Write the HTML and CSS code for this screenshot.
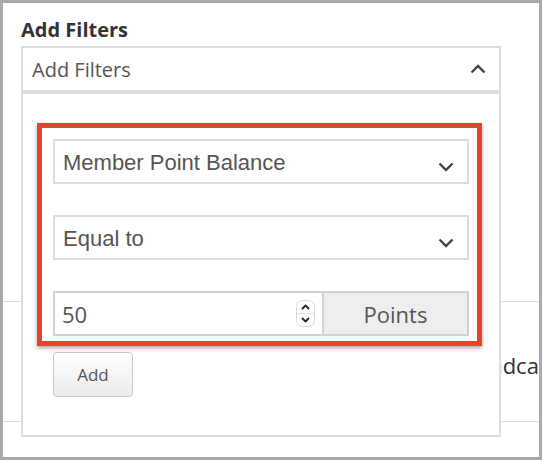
FILE: index.html
```html
<!DOCTYPE html>
<html>

<head>
  <title>Add Filters</title>
  <link rel="stylesheet" href="styles.css">
</head>

<body>
  <div class="frame">
    <h2 class="title">Add Filters</h2>

    <div class="filter-dropdown">
      <div class="filter-toggle">
        <span>Add Filters</span>
        <svg class="chevron" width="16" height="10" viewBox="0 0 16 10">
          <polyline points="1.5,8.5 8,2 14.5,8.5" />
        </svg>
      </div>

      <div class="filter-panel">
        <div class="highlight">
          <div class="select">
            <span>Member Point Balance</span>
            <svg class="chevron down" width="16" height="10" viewBox="0 0 16 10">
              <polyline points="1.5,1.5 8,8 14.5,1.5" />
            </svg>
          </div>
          <div class="select">
            <span>Equal to</span>
            <svg class="chevron down" width="16" height="10" viewBox="0 0 16 10">
              <polyline points="1.5,1.5 8,8 14.5,1.5" />
            </svg>
          </div>
          <div class="amount">
            <div class="amount-input">
              <span>50</span>
              <svg class="spinner" width="19" height="27" viewBox="0 0 19 27">
                <rect x="0.5" y="0.5" width="18" height="26" rx="6" />
                <line x1="1" y1="13.5" x2="18" y2="13.5" />
                <polyline points="6,9 9.5,5.5 13,9" />
                <polyline points="6,18 9.5,21.5 13,18" />
              </svg>
            </div>
            <div class="amount-unit">Points</div>
          </div>
        </div>
        <button type="button" class="add-button">Add</button>
      </div>
    </div>

    <div class="rows">
      <div class="row">
        <span class="row-label">Broadcast</span>
      </div>
    </div>
  </div>
</body>

</html>
```

FILE: styles.css
```css
body {
  margin: 0;
}

.frame {
  width: 542px;
  height: 460px;
  box-sizing: border-box;
  border: 3px solid #a9a9a9;
  background-color: #fff;
  padding-top: 15px;
  overflow: hidden;
  font-family: "Open Sans", "Liberation Sans", sans-serif;
}

.title {
  margin: 0 0 4px 18px;
  font-size: 20px;
  line-height: 24px;
  font-weight: bold;
  color: #333;
}

.filter-dropdown {
  position: relative;
  width: 480px;
  margin-left: 18px;
}

.filter-toggle {
  display: flex;
  align-items: center;
  justify-content: space-between;
  height: 42px;
  padding: 0 13px 0 9px;
  border: 2px solid #ddd;
  font-size: 20px;
  color: #555;
}

.chevron polyline {
  fill: none;
  stroke: #444;
  stroke-width: 2.4;
}

.chevron.down {
  margin-top: 8px;
}

.filter-panel {
  position: absolute;
  top: 100%;
  left: 0;
  right: 0;
  z-index: 10;
  padding: 29px 0 38px 0;
  border: 2px solid #ddd;
  background-color: #fff;
}

.highlight {
  display: flex;
  flex-direction: column;
  gap: 31px;
  width: 445px;
  box-sizing: border-box;
  margin-left: 14px;
  padding: 11px 8px 5px 11px;
  border: 5px solid #e5432c;
  box-shadow: 0 2px 4px rgba(0, 0, 0, 0.35);
}

.select {
  display: flex;
  align-items: center;
  justify-content: space-between;
  height: 45px;
  box-sizing: border-box;
  padding: 2px 13px 0 8px;
  border: 2px solid #ddd;
  font-family: "Liberation Sans", Arial, sans-serif;
  font-size: 22px;
  color: #555;
}

.amount {
  display: flex;
  height: 45px;
  box-sizing: border-box;
  border: 2px solid #d2d2d2;
  font-size: 22px;
  color: #555;
}

.amount-input {
  display: flex;
  align-items: center;
  justify-content: space-between;
  width: 253px;
  padding: 0 7px 0 7px;
  border-right: 2px solid #d2d2d2;
}

.amount-input span {
  padding-top: 1px;
}

.spinner rect {
  fill: #fff;
  stroke: #d8d8d8;
}

.spinner line {
  stroke: #e2e2e2;
}

.spinner polyline {
  fill: none;
  stroke: #222;
  stroke-width: 1.8;
}

.amount-unit {
  flex: 1;
  display: flex;
  align-items: center;
  justify-content: center;
  padding-top: 1px;
  background-color: #eee;
}

.add-button {
  display: block;
  width: 80px;
  height: 45px;
  margin: 6px 0 0 30px;
  border: 1px solid #c9c9c9;
  border-radius: 4px;
  background: linear-gradient(#fff, #ebebeb);
  font-family: "Open Sans", sans-serif;
  font-size: 17px;
  color: #555;
}

.rows {
  margin-top: 209px;
}

.row {
  height: 121px;
  box-sizing: border-box;
  padding: 46px 0 0 451px;
  border-top: 1px solid #ddd;
  border-bottom: 1px solid #ddd;
  white-space: nowrap;
}

.row-label {
  font-size: 22px;
  line-height: 34px;
  color: #333;
}
```
